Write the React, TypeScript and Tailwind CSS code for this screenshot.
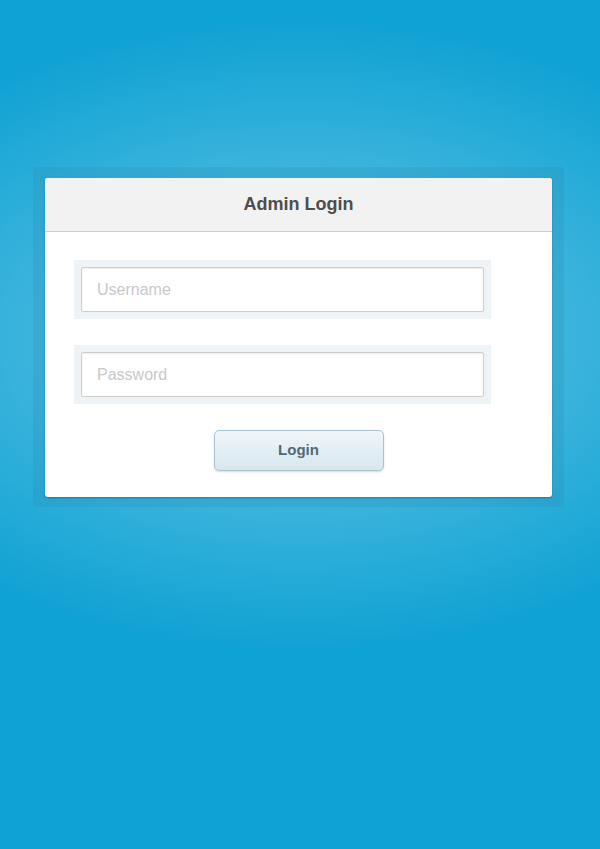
export default function App() {
    return (
        <div
            className="min-h-[849px] w-full pt-[167px] bg-[radial-gradient(ellipse_520px_320px_at_300px_335px,#4abce1_0%,#3db5dd_50%,#0ea1d3_100%)] bg-[#0ea1d3]"
            style={{ fontFamily: '"Liberation Sans", Arial, sans-serif' }}
        >
            {/* Outer translucent frame */}
            <div className="ml-[33px] w-[531px] rounded-[3px] bg-[#2a8db3]/25 px-[12px] pt-[11px] pb-[10px]">
                <div className="rounded-[3px] bg-white shadow-[0_1px_2px_rgba(0,0,0,0.25)] overflow-hidden">
                    {/* Header */}
                    <div className="h-[54px] flex items-center justify-center bg-[#f2f2f2] border-b border-[#cfcfcf]">
                        <h1 className="text-[18px] font-bold text-[#4d4d4d]">Admin Login</h1>
                    </div>

                    {/* Form */}
                    <form className="pt-[28px] pb-[26px] flex flex-col">
                        <div className="ml-[29px] w-[417px] bg-[#eef3f6] p-[7px]">
                            <input
                                type="text"
                                placeholder="Username"
                                className="w-full h-[45px] bg-white border border-[#cdcdcd] rounded-[2px] px-[15px] text-[16px] text-[#333] placeholder:text-[#c8c8c8] shadow-[inset_0_1px_2px_rgba(0,0,0,0.08)] outline-none"
                            />
                        </div>
                        <div className="ml-[29px] mt-[26px] w-[417px] bg-[#eef3f6] p-[7px]">
                            <input
                                type="password"
                                placeholder="Password"
                                className="w-full h-[45px] bg-white border border-[#cdcdcd] rounded-[2px] px-[15px] text-[16px] text-[#333] placeholder:text-[#c8c8c8] shadow-[inset_0_1px_2px_rgba(0,0,0,0.08)] outline-none"
                            />
                        </div>
                        <div className="mt-[26px] flex justify-center">
                            <button
                                type="button"
                                className="w-[170px] h-[41px] rounded-[5px] border border-[#a8c3cf] bg-gradient-to-b from-[#f0f7fa] to-[#d6e7ee] text-[15px] font-bold text-[#4e6a77] shadow-[0_1px_2px_rgba(0,0,0,0.15)]"
                            >
                                Login
                            </button>
                        </div>
                    </form>
                </div>
            </div>
        </div>
    );
}
